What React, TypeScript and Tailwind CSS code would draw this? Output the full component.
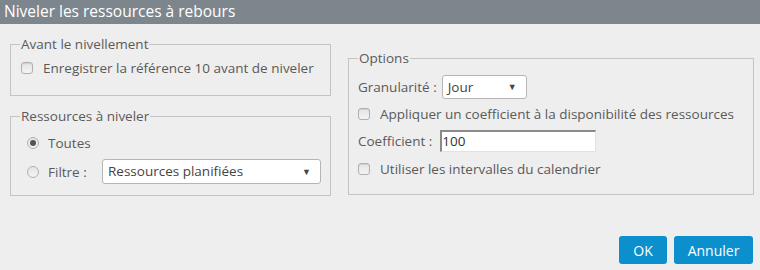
const font = { fontFamily: "'Open Sans', 'Liberation Sans', sans-serif" };

function Check({ label }: { label: string }) {
  return (
    <div className="flex items-center gap-[10px] leading-[18px]">
      <span className="w-[12px] h-[12px] rounded-[3px] border border-[#b0b0b0] bg-gradient-to-b from-[#e4e4e4] to-[#f4f4f4] shadow-[inset_0_1px_1px_rgba(0,0,0,0.1)]" />
      <span>{label}</span>
    </div>
  );
}

function Radio({ label, checked }: { label: string; checked?: boolean }) {
  return (
    <div className="flex items-center gap-[9px] leading-[18px]">
      <span className="w-[12px] h-[12px] rounded-full border border-[#b0b0b0] bg-gradient-to-b from-[#e4e4e4] to-[#f4f4f4] flex items-center justify-center">
        {checked && <span className="w-[6px] h-[6px] rounded-full bg-[#555]" />}
      </span>
      <span>{label}</span>
    </div>
  );
}

function Select({ value, className }: { value: string; className: string }) {
  return (
    <div className={"flex items-center justify-between bg-white border border-[#b5b5b5] rounded-[3px] pl-[5px] pr-[9px] " + className}>
      <span className="text-[#444]">{value}</span>
      <span className="text-[9px] text-[#444]">▼</span>
    </div>
  );
}

export default function App() {
  return (
    <div className="w-[760px] h-[270px] bg-[#eeeeee] flex flex-col text-[13.5px] text-[#5a5a5a]" style={font}>
      <div className="h-[24px] bg-[#7d868d] text-white text-[15.5px] pl-[4px] flex items-center">
        Niveler les ressources à rebours
      </div>

      <div className="flex pl-[10px] gap-[17px]">
        {/* Left column */}
        <div className="w-[321px] shrink-0 flex flex-col gap-[12px] mt-[12px]">
          <fieldset className="border border-[#c4c4c4] h-[60px] pl-[9px]">
            <legend className="px-[1px] leading-[16px]">Avant le nivellement</legend>
            <div className="pl-[1px] pt-[7px]">
              <Check label="Enregistrer la référence 10 avant de niveler" />
            </div>
          </fieldset>

          <fieldset className="border border-[#c4c4c4] h-[88px] pl-[9px]">
            <legend className="px-[1px] leading-[16px]">Ressources à niveler</legend>
            <div className="pl-[7px] pt-[10px] flex flex-col gap-[7px]">
              <Radio label="Toutes" checked />
              <div className="flex items-center">
                <div className="w-[75px]">
                  <Radio label="Filtre :" />
                </div>
                <Select value="Ressources planifiées" className="w-[219px] h-[25px]" />
              </div>
            </div>
          </fieldset>
        </div>

        {/* Right column */}
        <div className="w-[406px] shrink-0 mt-[26px]">
          <fieldset className="border border-[#c4c4c4] h-[145px] pl-[9px]">
            <legend className="px-[1px] leading-[16px]">Options</legend>
            <div className="flex flex-col pt-[9px]">
              <div className="flex items-center gap-[5px]">
                <span>Granularité :</span>
                <Select value="Jour" className="w-[85px] h-[24px]" />
              </div>
              <div className="mt-[6px]">
                <Check label="Appliquer un coefficient à la disponibilité des ressources" />
              </div>
              <div className="flex items-center gap-[8px] mt-[7px]">
                <span>Coefficient :</span>
                <div className="w-[156px] h-[22px] bg-white border-t-2 border-l-2 border-t-[#8a8a8a] border-l-[#8a8a8a] border-b border-r border-b-[#e2e2e2] border-r-[#e2e2e2] flex items-center text-[#333] leading-none">
                  100
                </div>
              </div>
              <div className="mt-[8px]">
                <Check label="Utiliser les intervalles du calendrier" />
              </div>
            </div>
          </fieldset>
        </div>
      </div>

      <div className="flex justify-end gap-[7px] pr-[7px] mt-auto mb-[6px]">
        <button className="w-[48px] h-[28px] rounded-[3px] bg-[#0c8fcd] text-white text-[14px]">OK</button>
        <button className="w-[79px] h-[28px] rounded-[3px] bg-[#0c8fcd] text-white text-[14px]">Annuler</button>
      </div>
    </div>
  );
}
